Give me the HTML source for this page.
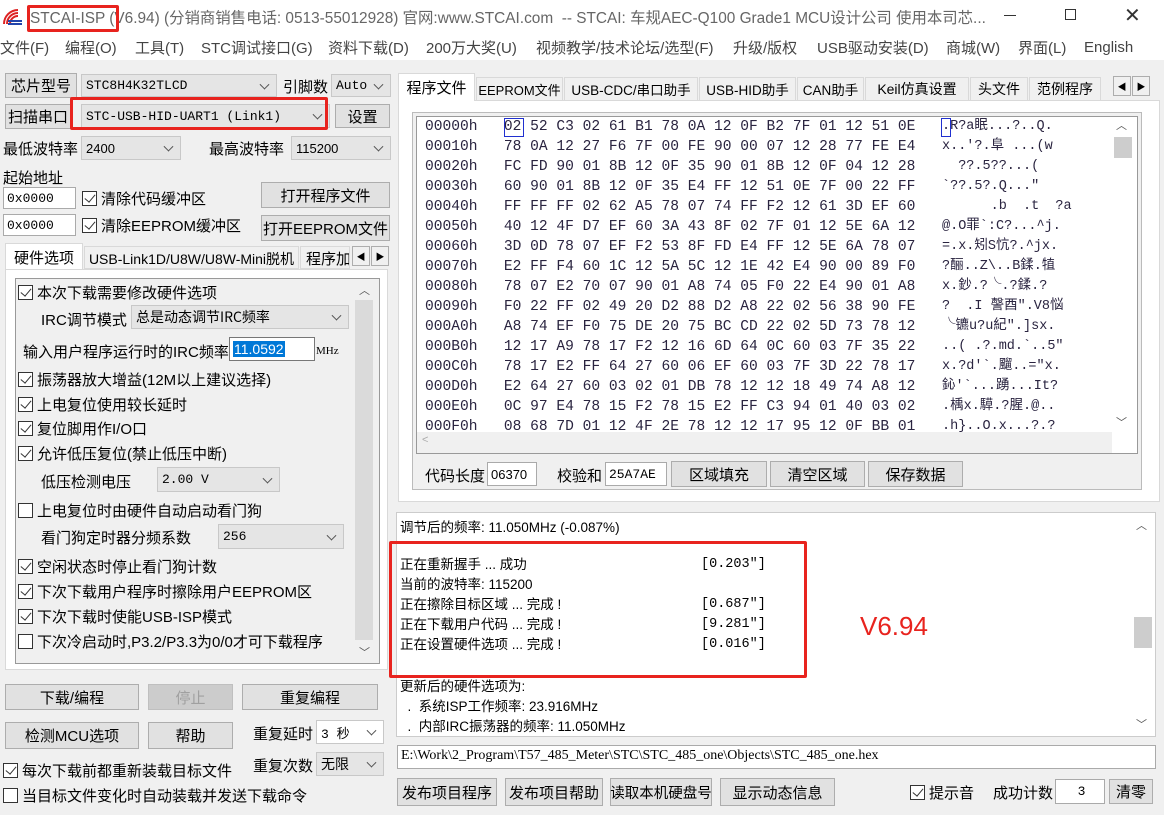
<!DOCTYPE html>
<html><head><meta charset="utf-8">
<style>
*{box-sizing:border-box;margin:0;padding:0}
body{width:1164px;height:815px;overflow:hidden;background:#f0f0f0;font-family:"Liberation Sans","Noto Sans CJK SC",sans-serif;font-size:14px;color:#000;position:relative}
.a{position:absolute;white-space:nowrap}
.btn{position:absolute;background:#e1e1e1;border:1px solid #adadad;text-align:center;font-size:15px;display:flex;align-items:center;justify-content:center;white-space:nowrap}
.cmb{position:absolute;background:#e5e5e5;border:1px solid #c8c8c8;font-size:13px;padding-left:4px;display:flex;align-items:center;font-family:"Liberation Mono","Noto Sans CJK SC",monospace}
.cmb::after{content:"";position:absolute;right:8px;top:50%;width:6px;height:6px;border-right:1px solid #555;border-bottom:1px solid #555;transform:translateY(-70%) rotate(45deg)}
.inp{position:absolute;background:#fff;border:1px solid #aaa;font-size:13px;padding-left:3px;display:flex;align-items:center;font-family:"Liberation Mono",monospace}
.cb{display:inline-block;width:15px;height:15px;border:1px solid #333;background:#fff;vertical-align:-2px;margin-right:4px;position:relative}
.cb.on::after{content:"";position:absolute;left:4px;top:0px;width:5px;height:9px;border-right:1.5px solid #333;border-bottom:1.5px solid #333;transform:rotate(40deg)}
.t{font-size:15px}
.tab{position:absolute;top:77px;height:23px;border:1px solid #d9d9d9;border-bottom:none;background:#f0f0f0;font-size:14px;display:flex;align-items:center;justify-content:center;white-space:nowrap;overflow:hidden}
.hex{position:absolute;left:425px;font-family:"Liberation Mono","Noto Sans CJK SC",monospace;font-size:14.6px;color:#2a2440;white-space:pre;line-height:20px}
.log{position:absolute;left:400px;font-size:13.5px;white-space:pre;font-family:"Liberation Sans","Noto Sans CJK SC",sans-serif}
.arr{position:absolute;width:18px;height:20px;background:#f0f0f0;border:1px solid #adadad;font-size:9px;display:flex;align-items:center;justify-content:center}
</style></head><body>
<div class="a" style="left:0;top:0;width:1164px;height:34px;background:#fff"></div>
<svg class="a" style="left:2px;top:8px" width="22" height="18"><path d="M2 16 A14 14 0 0 1 16 2 M5 16 A11 11 0 0 1 16 5 M8 16 A8 8 0 0 1 16 8" stroke="#d22" stroke-width="2" fill="none"/><path d="M6 13h14M6 16h14" stroke="#24a" stroke-width="2"/></svg>
<div class="a" style="left:30px;top:6px;font-size:15.4px;color:#666">STCAI-ISP (V6.94) (分销商销售电话: 0513-55012928) 官网:www.STCAI.com&nbsp; -- STCAI: 车规AEC-Q100 Grade1 MCU设计公司 使用本司芯...</div>
<div class="a" style="left:27px;top:5px;width:92px;height:27px;border:3px solid #e8231e;border-radius:2px"></div>
<div class="a" style="left:1004px;top:15px;width:12px;height:1px;background:#333"></div>
<div class="a" style="left:1065px;top:9px;width:11px;height:11px;border:1px solid #333"></div>
<div class="a" style="left:1124px;top:3px;font-size:20px;color:#333">✕</div>
<div class="a" style="left:0;top:34px;width:1164px;height:26px;background:#fff"></div>
<div class="a" style="top:37px;left:0;font-size:15px;color:#444">
<span class="a" style="left:0">文件(F)</span><span class="a" style="left:65px">编程(O)</span><span class="a" style="left:135px">工具(T)</span><span class="a" style="left:201px">STC调试接口(G)</span><span class="a" style="left:328px">资料下载(D)</span><span class="a" style="left:426px">200万大奖(U)</span><span class="a" style="left:536px">视频教学/技术论坛/选型(F)</span><span class="a" style="left:733px">升级/版权</span><span class="a" style="left:817px">USB驱动安装(D)</span><span class="a" style="left:946px">商城(W)</span><span class="a" style="left:1018px">界面(L)</span><span class="a" style="left:1084px;top:2px">English</span></div>

<div class="btn" style="left:5px;top:73px;width:72px;height:25px">芯片型号</div>
<div class="cmb" style="left:81px;top:74px;width:196px;height:23px">STC8H4K32TLCD</div>
<div class="a t" style="left:283px;top:76px">引脚数</div>
<div class="cmb" style="left:331px;top:74px;width:60px;height:23px">Auto</div>
<div class="btn" style="left:5px;top:104px;width:66px;height:25px">扫描串口</div>
<div class="cmb" style="left:81px;top:104px;width:249px;height:24px">STC-USB-HID-UART1 (Link1)</div>
<div class="a" style="left:70px;top:97px;width:258px;height:33px;border:3px solid #e8231e;border-radius:2px"></div>
<div class="btn" style="left:335px;top:104px;width:55px;height:24px">设置</div>
<div class="a t" style="left:3px;top:138px">最低波特率</div>
<div class="cmb" style="left:81px;top:136px;width:100px;height:24px;font-family:'Liberation Sans'">2400</div>
<div class="a t" style="left:209px;top:138px">最高波特率</div>
<div class="cmb" style="left:291px;top:136px;width:100px;height:24px;font-family:'Liberation Sans'">115200</div>
<div class="a t" style="left:3px;top:167px">起始地址</div>
<div class="inp" style="left:3px;top:187px;width:73px;height:22px">0x0000</div>
<div class="a t" style="left:82px;top:188px"><span class="cb on"></span>清除代码缓冲区</div>
<div class="btn" style="left:261px;top:182px;width:129px;height:26px">打开程序文件</div>
<div class="inp" style="left:3px;top:214px;width:73px;height:22px">0x0000</div>
<div class="a t" style="left:82px;top:215px"><span class="cb on"></span>清除EEPROM缓冲区</div>
<div class="btn" style="left:261px;top:215px;width:129px;height:26px">打开EEPROM文件</div>
<div class="a" style="left:5px;top:243px;width:78px;height:27px;background:#fff;border:1px solid #d9d9d9;border-bottom:none;font-size:15px;text-align:center;padding-top:3px">硬件选项</div>
<div class="a" style="left:84px;top:246px;width:215px;height:23px;border:1px solid #d9d9d9;font-size:14px;text-align:center;padding-top:2px">USB-Link1D/U8W/U8W-Mini脱机</div>
<div class="a" style="left:300px;top:246px;width:50px;height:23px;border:1px solid #d9d9d9;font-size:15px;overflow:hidden;padding:1px 0 0 5px">程序加</div>
<div class="arr" style="left:352px;top:246px">◀</div><div class="arr" style="left:371px;top:246px">▶</div>
<div class="a" style="left:5px;top:269px;width:383px;height:401px;background:#fff;border:1px solid #d9d9d9"></div>
<div class="a" style="left:15px;top:278px;width:365px;height:386px;border:1px solid #999;background:#f0f0f0"></div>
<div class="a" style="left:355px;top:300px;width:18px;height:340px;background:#dadada"></div>
<div class="a" style="left:359px;top:282px;font-size:11px;color:#555">︿</div>
<div class="a" style="left:359px;top:644px;font-size:11px;color:#555">﹀</div>
<div class="a t" style="left:18px;top:282px"><span class="cb on"></span>本次下载需要修改硬件选项</div>
<div class="a t" style="left:41px;top:309px">IRC调节模式</div>
<div class="cmb" style="left:131px;top:305px;width:218px;height:24px;font-family:'Noto Sans CJK SC';font-size:14px">总是动态调节IRC频率</div>
<div class="a t" style="left:23px;top:341px">输入用户程序运行时的IRC频率</div>
<div class="inp" style="left:229px;top:337px;width:86px;height:24px;border-color:#777"><span style="background:#0078d7;color:#fff;font-family:'Liberation Sans';font-size:14px;padding:0 1px">11.0592</span></div>
<div class="a" style="left:316px;top:345px;font-size:11px;font-family:'Liberation Serif'">MHz</div>
<div class="a t" style="left:18px;top:369px"><span class="cb on"></span>振荡器放大增益(12M以上建议选择)</div>
<div class="a t" style="left:18px;top:394px"><span class="cb on"></span>上电复位使用较长延时</div>
<div class="a t" style="left:18px;top:418px"><span class="cb on"></span>复位脚用作I/O口</div>
<div class="a t" style="left:18px;top:443px"><span class="cb on"></span>允许低压复位(禁止低压中断)</div>
<div class="a t" style="left:41px;top:471px">低压检测电压</div>
<div class="cmb" style="left:157px;top:467px;width:123px;height:25px">2.00 V</div>
<div class="a t" style="left:18px;top:500px"><span class="cb"></span>上电复位时由硬件自动启动看门狗</div>
<div class="a t" style="left:41px;top:527px">看门狗定时器分频系数</div>
<div class="cmb" style="left:218px;top:524px;width:126px;height:25px">256</div>
<div class="a t" style="left:18px;top:556px"><span class="cb on"></span>空闲状态时停止看门狗计数</div>
<div class="a t" style="left:18px;top:581px"><span class="cb on"></span>下次下载用户程序时擦除用户EEPROM区</div>
<div class="a t" style="left:18px;top:606px"><span class="cb on"></span>下次下载时使能USB-ISP模式</div>
<div class="a t" style="left:18px;top:631px"><span class="cb"></span>下次冷启动时,P3.2/P3.3为0/0才可下载程序</div>
<div class="btn" style="left:5px;top:684px;width:134px;height:26px">下载/编程</div>
<div class="btn" style="left:148px;top:684px;width:85px;height:26px;color:#a0a0a0;background:#ccc;border-color:#bfbfbf">停止</div>
<div class="btn" style="left:242px;top:684px;width:136px;height:26px">重复编程</div>
<div class="btn" style="left:5px;top:722px;width:134px;height:27px">检测MCU选项</div>
<div class="btn" style="left:148px;top:722px;width:85px;height:27px">帮助</div>
<div class="a t" style="left:253px;top:723px">重复延时</div>
<div class="cmb" style="left:316px;top:720px;width:68px;height:24px;background:#fff">3 秒</div>
<div class="a t" style="left:253px;top:755px">重复次数</div>
<div class="cmb" style="left:316px;top:752px;width:68px;height:24px;font-family:'Noto Sans CJK SC';font-size:14px">无限</div>
<div class="a t" style="left:3px;top:760px"><span class="cb on"></span>每次下载前都重新装载目标文件</div>
<div class="a t" style="left:3px;top:785px"><span class="cb"></span>当目标文件变化时自动装载并发送下载命令</div>

<div class="a" style="left:398px;top:100px;width:762px;height:402px;background:#fff;border:1px solid #d9d9d9"></div>
<div class="tab" style="left:398px;top:73px;width:77px;height:28px;background:#fff;font-size:15px">程序文件</div>
<div class="tab" style="left:476px;width:87px;font-size:13px">EEPROM文件</div>
<div class="tab" style="left:564px;width:134px;font-size:13.5px">USB-CDC/串口助手</div>
<div class="tab" style="left:699px;width:97px;font-size:13.5px">USB-HID助手</div>
<div class="tab" style="left:797px;width:67px;font-size:13.5px">CAN助手</div>
<div class="tab" style="left:865px;width:104px">Keil仿真设置</div>
<div class="tab" style="left:970px;width:58px">头文件</div>
<div class="tab" style="left:1029px;width:72px">范例程序</div>
<div class="arr" style="left:1113px;top:76px">◀</div><div class="arr" style="left:1132px;top:76px">▶</div>
<div class="a" style="left:412px;top:112px;width:730px;height:378px;border:1px solid #bbb;background:#f0f0f0"></div>
<div class="a" style="left:416px;top:116px;width:722px;height:338px;background:#fff;border:1px solid #999"></div>
<div class="a" style="left:1114px;top:137px;width:18px;height:21px;background:#cdcdcd"></div>
<div class="a" style="left:1116px;top:117px;font-size:11px;color:#555">︿</div>
<div class="a" style="left:1116px;top:414px;font-size:11px;color:#555">﹀</div>
<div class="a" style="left:417px;top:432px;width:695px;height:21px;background:#f0f0f0"></div>
<div class="a" style="left:422px;top:434px;font-size:11px;color:#aaa">&lt;</div>
<div class="a" style="left:504px;top:118px;width:20px;height:19px;border:1px solid #2030d0"></div>
<div class="a" style="left:941px;top:118px;width:10px;height:19px;border:1px solid #2030d0"></div>
<div class="hex" style="top:117px">00000h   02 52 C3 02 61 B1 78 0A 12 0F B2 7F 01 12 51 0E
00010h   78 0A 12 27 F6 7F 00 FE 90 00 07 12 28 77 FE E4
00020h   FC FD 90 01 8B 12 0F 35 90 01 8B 12 0F 04 12 28
00030h   60 90 01 8B 12 0F 35 E4 FF 12 51 0E 7F 00 22 FF
00040h   FF FF FF 02 62 A5 78 07 74 FF F2 12 61 3D EF 60
00050h   40 12 4F D7 EF 60 3A 43 8F 02 7F 01 12 5E 6A 12
00060h   3D 0D 78 07 EF F2 53 8F FD E4 FF 12 5E 6A 78 07
00070h   E2 FF F4 60 1C 12 5A 5C 12 1E 42 E4 90 00 89 F0
00080h   78 07 E2 70 07 90 01 A8 74 05 F0 22 E4 90 01 A8
00090h   F0 22 FF 02 49 20 D2 88 D2 A8 22 02 56 38 90 FE
000A0h   A8 74 EF F0 75 DE 20 75 BC CD 22 02 5D 73 78 12
000B0h   12 17 A9 78 17 F2 12 16 6D 64 0C 60 03 7F 35 22
000C0h   78 17 E2 FF 64 27 60 06 EF 60 03 7F 3D 22 78 17
000D0h   E2 64 27 60 03 02 01 DB 78 12 12 18 49 74 A8 12
000E0h   0C 97 E4 78 15 F2 78 15 E2 FF C3 94 01 40 03 02
000F0h   08 68 7D 01 12 4F 2E 78 12 12 17 95 12 0F BB 01</div>
<div class="hex" style="top:117px;left:942px;font-size:13.5px">.R?a眠...?..Q.
x..'?.阜 ...(w
  ??.5??...(
`??.5?.Q..."
      .b  .t  ?a
@.O罪`:C?...^j.
=.x.矧S忼?.^jx.
?酾..Z\..B鍒.犆
x.鈔.?╰.?鍒.?
?  .I 謦酉".V8悩
╰镳u?u紀".]sx.
..( .?.md.`..5"
x.?d'`.飀..="x.
鈊'`...踴...It?
.楀x.騲.?腥.@..
.h}..O.x...?.?</div>
<div class="a t" style="left:425px;top:465px">代码长度</div>
<div class="inp" style="left:487px;top:462px;width:50px;height:24px;font-family:'Liberation Sans'">06370</div>
<div class="a t" style="left:557px;top:465px">校验和</div>
<div class="inp" style="left:605px;top:462px;width:62px;height:24px">25A7AE</div>
<div class="btn" style="left:671px;top:461px;width:96px;height:26px">区域填充</div>
<div class="btn" style="left:770px;top:461px;width:95px;height:26px">清空区域</div>
<div class="btn" style="left:868px;top:461px;width:95px;height:26px">保存数据</div>

<div class="a" style="left:396px;top:512px;width:760px;height:225px;background:#fff;border:1px solid #ccc"></div>
<div class="a" style="left:1134px;top:617px;width:18px;height:31px;background:#cdcdcd"></div>
<div class="a" style="left:1136px;top:517px;font-size:11px;color:#555">︿</div>
<div class="a" style="left:1136px;top:716px;font-size:11px;color:#555">﹀</div>
<div class="log" style="top:516px">调节后的频率: 11.050MHz (-0.087%)</div>
<div class="log" style="top:555px;line-height:20px">正在重新握手 ... 成功
当前的波特率: 115200
正在擦除目标区域 ... 完成 !
正在下载用户代码 ... 完成 !
正在设置硬件选项 ... 完成 !</div>
<div class="log" style="left:701px;top:555px;line-height:20px;font-family:'Liberation Mono'">[0.203"]

[0.687"]
[9.281"]
[0.016"]</div>
<div class="a" style="left:389px;top:541px;width:418px;height:137px;border:3px solid #e8231e;border-radius:2px"></div>
<div class="a" style="left:860px;top:611px;font-size:26px;color:#e8231e">V6.94</div>
<div class="log" style="top:677px;line-height:20px">更新后的硬件选项为:
  .  系统ISP工作频率: 23.916MHz
  .  内部IRC振荡器的频率: 11.050MHz</div>
<div class="a" style="left:397px;top:745px;width:759px;height:24px;background:#fff;border:1px solid #aaa;font-family:'Liberation Serif','Noto Sans CJK SC',serif;font-size:14px;padding:2px 0 0 3px">E:\Work\2_Program\T57_485_Meter\STC\STC_485_one\Objects\STC_485_one.hex</div>
<div class="btn" style="left:397px;top:778px;width:100px;height:28px">发布项目程序</div>
<div class="btn" style="left:505px;top:778px;width:98px;height:28px">发布项目帮助</div>
<div class="btn" style="left:610px;top:778px;width:102px;height:28px;font-size:14.5px">读取本机硬盘号</div>
<div class="btn" style="left:720px;top:778px;width:115px;height:28px">显示动态信息</div>
<div class="a t" style="left:910px;top:782px"><span class="cb on"></span>提示音</div>
<div class="a t" style="left:993px;top:782px">成功计数</div>
<div class="inp" style="left:1055px;top:779px;width:50px;height:25px;justify-content:center">3</div>
<div class="btn" style="left:1109px;top:779px;width:44px;height:25px">清零</div>
</body></html>
